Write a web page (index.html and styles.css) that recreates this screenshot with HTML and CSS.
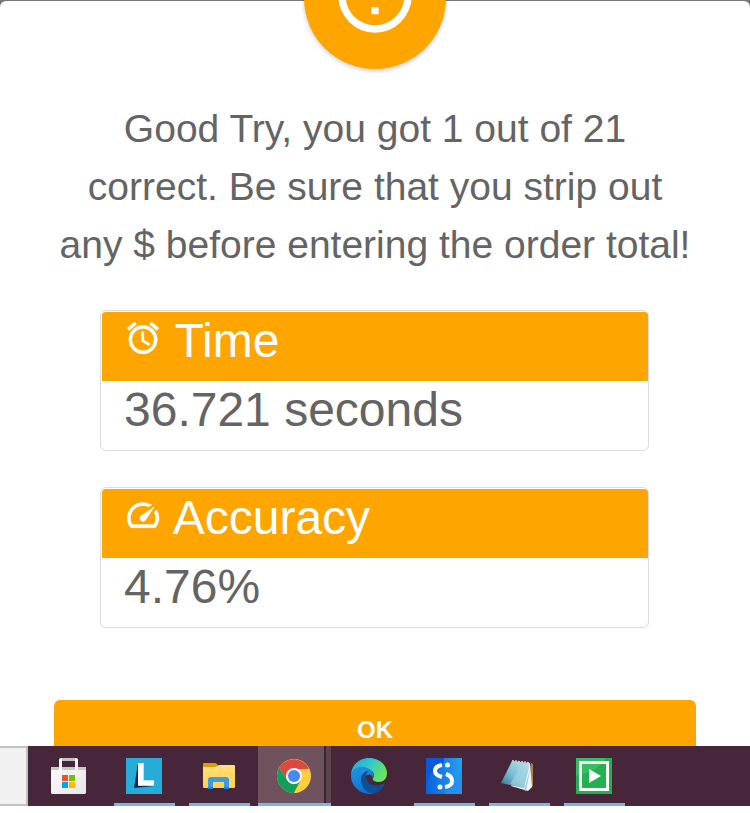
FILE: index.html
```html
<!DOCTYPE html>
<html lang="en">
<head>
<meta charset="utf-8">
<meta name="viewport" content="width=device-width, initial-scale=1">
<title>Results</title>
<link rel="stylesheet" href="styles.css">
</head>
<body>
<main class="backdrop">
  <section class="dialog" role="dialog" aria-label="Results">
    <div class="badge">
      <svg class="badge-icon" viewBox="0 0 24 24" aria-hidden="true"><path d="M11 15h2v2h-2zM11 7h2v6h-2zM12 2a10 10 0 1 0 0 20 10 10 0 0 0 0-20m0 18a8 8 0 1 1 0-16 8 8 0 0 1 0 16"/></svg>
    </div>
    <p class="message">Good Try, you got 1 out of 21 correct. Be sure that you strip out any $ before entering the order total!</p>
    <div class="stats">
      <article class="stat">
        <h2 class="stat-title"><svg class="stat-icon" viewBox="0 0 24 24" aria-hidden="true"><path d="M12 20a7 7 0 1 1 0-14 7 7 0 0 1 0 14m0-16a9 9 0 1 0 0 18 9 9 0 0 0 0-18m.5 4H11v6l4.750 2.850.750-1.230-4-2.370zM7.880 3.390 6.600 1.860 2 5.710l1.290 1.530zM22 5.720l-4.600-3.860-1.290 1.530 4.600 3.860z"/></svg> Time</h2>
        <p class="stat-value">36.721 seconds</p>
      </article>
      <article class="stat">
        <h2 class="stat-title"><svg class="stat-icon" viewBox="0 0 24 24" aria-hidden="true"><path d="M20.380 8.570l-1.230 1.850a8 8 0 0 1-.220 7.580H5.070A8 8 0 0 1 15.580 6.850l1.850-1.230A10 10 0 0 0 3.350 19a2 2 0 0 0 1.720 1h13.850a2 2 0 0 0 1.740-1 10 10 0 0 0-.270-10.440zm-9.790 6.840a2 2 0 0 0 2.830 0l5.660-8.490-8.490 5.660a2 2 0 0 0 0 2.830z"/></svg> Accuracy</h2>
        <p class="stat-value">4.76%</p>
      </article>
    </div>
    <button class="ok" type="button">OK</button>
  </section>
</main>
<nav class="taskbar" aria-label="Taskbar">
  <div class="search-end"></div>
  <div class="apps">
    <button class="app" type="button" aria-label="Store">
      <svg class="app-icon" viewBox="0 0 36 36">
        <defs><linearGradient id="bag" x2="1" y2="1"><stop stop-color="#fff"/><stop offset="1" stop-color="#e6e6e6"/></linearGradient></defs>
        <path fill="#c9c7c8" d="M0 9h35v4H0z"/>
        <path fill="#c4c4c4" d="M10 0h15v3H10z"/>
        <path fill="url(#bag)" d="M0 12h8V2q0-2 2-2h1v12h13V0h1q2 0 2 2v10h8v23l-1 1H1l-1-1z"/>
        <path fill="#f25022" d="M11 17h6v6h-6z"/><path fill="#7fba00" d="M18 17h6v6h-6z"/>
        <path fill="#00a4ef" d="M11 24h6v6h-6z"/><path fill="#ffb900" d="M18 24h6v6h-6z"/>
      </svg>
    </button>
    <button class="app running" type="button" aria-label="L">
      <svg class="app-icon" viewBox="0 0 36 36">
        <path fill="#27acd9" d="M0 0h36v36H0z"/>
        <path fill="#082561" d="M12 5 8 30l20-2-16-2z"/>
        <path fill="#b9dff0" d="M12 5h6v17h10v6H12z"/>
        <path fill="#fff" d="M12 5h5v18h11v4H12z"/>
      </svg>
    </button>
    <button class="app running" type="button" aria-label="File Explorer">
      <svg class="app-icon" viewBox="0 0 36 36">
        <defs><linearGradient id="folder" x2="0" y2="1"><stop stop-color="#ffe07b"/><stop offset="1" stop-color="#ffd04f"/></linearGradient></defs>
        <path fill="#dc9d06" d="M2 6q0-1 1-1h11q2 0 3 3l-3 4H2z"/>
        <path fill="url(#folder)" d="M2 9h12l4-2h15q1 0 1 1v21q0 1-1 1H3q-1 0-1-1z"/>
        <path fill="#3f9be0" d="M7 22q0-3 3-3h15q3 0 3 3v9h-5v-7H12v7H7z"/>
        <path fill="#2682cf" d="M7 29h5v2H7zM23 29h5v2h-5z"/>
      </svg>
    </button>
    <button class="app running active" type="button" aria-label="Chrome">
      <svg class="app-icon" viewBox="0 0 36 36">
        <circle cx="18" cy="18" r="17" fill="#ffcd40"/>
        <path fill="#db4a3d" d="M3.300 9.500A17 17 0 0 1 32.700 10L32 11H18a8 8 0 0 0-7 11z"/>
        <path fill="#11a05c" d="M3.300 9.500 11 22a8 8 0 0 0 14 0l-7 13A17 17 0 0 1 3.300 9.500"/>
        <path fill="#ffcd40" d="M18 11h14.500A17 17 0 0 1 18 35l7-13z"/>
        <circle cx="18" cy="18" r="8" fill="#f5f5f5"/><circle cx="18" cy="18" r="6" fill="#4788f1"/>
      </svg>
    </button>
    <button class="app" type="button" aria-label="Edge">
      <svg class="app-icon" viewBox="0 0 36 36">
        <defs>
          <linearGradient id="edge-top" x2="1" y2=".5"><stop stop-color="#22a4df"/><stop offset=".5" stop-color="#30c7ce"/><stop offset="1" stop-color="#6be35a"/></linearGradient>
          <linearGradient id="edge-left" x2=".4" y2="1"><stop stop-color="#2297df"/><stop offset="1" stop-color="#0874d3"/></linearGradient>
        </defs>
        <path fill="url(#edge-top)" d="M0 16C1 6 9 0 18 0c10 0 18 7 18 15 0 6-4 9-8 9-5 0-7-2-6-4 3-4-1-9-8-10-7 0-12 3-14 6"/>
        <path fill="url(#edge-left)" d="M0 18C0 11 7 8 13 9c7 1 11 7 9 11-2-6-8-4-9 2-1 8 6 13 13 12-11 6-26-3-26-16"/>
        <path fill="#0f4f97" d="M10 21c0-4 3-8 8-8-4 3-4 8 0 12 4 3 10 3 14 1q2 0 1 2c-3 5-8 8-14 7-6-2-9-8-9-14"/>
      </svg>
    </button>
    <button class="app running" type="button" aria-label="S">
      <svg class="app-icon" viewBox="0 0 36 36">
        <defs><linearGradient id="sky" x2="1"><stop stop-color="#0862dc"/><stop offset="1" stop-color="#28a1ef"/></linearGradient></defs>
        <path fill="url(#sky)" d="M0 0h36v36H0z"/>
        <path fill="#2590ed" d="M18 36Q35 26 36 3v33z"/><path fill="#075bda" d="M0 0h18v5Q3 12 0 30z"/>
        <g fill="none" stroke="#fff" stroke-width="4"><path d="M16 7q-7 1-7 6 0 4 7 6"/><path d="M20 16q6 2 6 7 0 5-7 6"/></g>
        <circle cx="21.500" cy="7" r="2.500" fill="#fff"/><circle cx="14" cy="29" r="2.500" fill="#fff"/>
      </svg>
    </button>
    <button class="app running" type="button" aria-label="Notepad">
      <svg class="app-icon" viewBox="0 0 36 36">
        <defs><linearGradient id="page" x1="0" y1="1" x2="1" y2="0"><stop stop-color="#306c87"/><stop offset=".45" stop-color="#7dc0d5"/><stop offset="1" stop-color="#c4e5ec"/></linearGradient></defs>
        <path fill="#aa8142" d="M30 5l2 1v22l-4 3z"/>
        <path fill="#eef5f6" d="M29 5l2 24-4 4-17-5z"/>
        <path fill="#b5cbd1" d="M30 8 25 33l-2-1z"/>
        <path fill="url(#page)" d="M11 3l18 2-6 25-23-5z"/>
        <path fill="#a5d6e4" opacity=".6" d="M9 26 20 8l8 1-5 21z"/>
        <path stroke="#c6ccca" stroke-width="2" stroke-dasharray="2 1" d="m11 3 18 2"/>
      </svg>
    </button>
    <button class="app running" type="button" aria-label="Player">
      <svg class="app-icon" viewBox="0 0 36 36">
        <path fill="#22b14f" d="M0 0h36v36H0z"/><path fill="#36bd62" d="M0 0h30q-8 14-30 18z"/>
        <path fill="#fff" fill-rule="evenodd" d="M3 3h30v30H3zm3 3v24h24V6z"/>
        <path fill="#fff" d="m13 11 12 7-12 7z"/>
      </svg>
    </button>
  </div>
</nav>
</body>
</html>
```
FILE: styles.css
```css
* {
  box-sizing: border-box;
}

body {
  display: grid;
  grid-template-rows: minmax(0, 1fr) auto;
  height: 100vh;
  margin: 0;
  padding-bottom: 7px;
  background: #fff;
  color: #646464;
  font-family: "Liberation Sans", Arial, sans-serif;
}

.backdrop {
  padding-top: 1px;
  overflow: hidden;
  background: #787677;
}

.dialog {
  position: relative;
  display: flex;
  flex-direction: column;
  min-height: 100%;
  padding: 99px 54px 0;
  border-radius: 6px 6px 0 0;
  background: #fff;
}

.badge {
  position: absolute;
  top: -74px;
  left: 50%;
  display: grid;
  place-items: center;
  width: 142px;
  height: 142px;
  margin-left: -71px;
  border-radius: 50%;
  background: #ffa500;
  box-shadow: 0 2px 4px rgba(0, 0, 0, 0.2);
}

.badge-icon {
  width: 88px;
  height: 88px;
  margin-bottom: 4px;
  fill: #fff;
}

.message {
  margin: 0 0 36px;
  font-size: 39px;
  line-height: 58px;
  text-align: center;
}

.stats {
  display: grid;
  gap: 36px;
  margin: 0 47px 72px 46px;
}

.stat {
  padding: 1px 0 0 1px;
  border: 1px solid #ddd;
  border-radius: 6px;
}

.stat-title,
.stat-value {
  margin: 0;
  font-size: 48px;
  font-weight: 400;
  line-height: 57px;
}

.stat-title {
  padding: 0 22px 12px;
  border-radius: 4px 4px 0 0;
  background: #ffa500;
  color: #fff;
}

.stat-value {
  padding: 0 22px 12px;
}

.stat-icon {
  width: 38px;
  height: 38px;
  fill: currentColor;
  stroke: currentColor;
  stroke-width: 0.3;
}

.ok {
  flex: none;
  height: 60px;
  padding: 0;
  border: 0;
  border-radius: 6px;
  background: #ffa500;
  color: #fff;
  font: bold 24px/60px "Liberation Sans", Arial, sans-serif;
}

.taskbar {
  display: flex;
  height: 60px;
  background: #482639;
}

.search-end {
  width: 28px;
  border: 2px solid #c2c2c2;
  border-left: 0;
  background: #f1f1f1;
}

.apps {
  display: flex;
  padding-left: 3px;
}

.app {
  position: relative;
  display: grid;
  place-items: center;
  width: 75px;
  padding: 0;
  border: 0;
  background: none;
}

.app-icon {
  position: relative;
  width: 36px;
  height: 36px;
}

.running::after {
  content: "";
  position: absolute;
  right: 6px;
  bottom: 0;
  left: 8px;
  height: 3px;
  background: #78b5ed;
}

.active::before {
  content: "";
  position: absolute;
  inset: 0 0 0 2px;
  background: linear-gradient(to left, #5d4350 5px, #3b2431 5px 7px, #70525f 7px);
}

.active::after {
  right: 0;
  left: 2px;
}
```
